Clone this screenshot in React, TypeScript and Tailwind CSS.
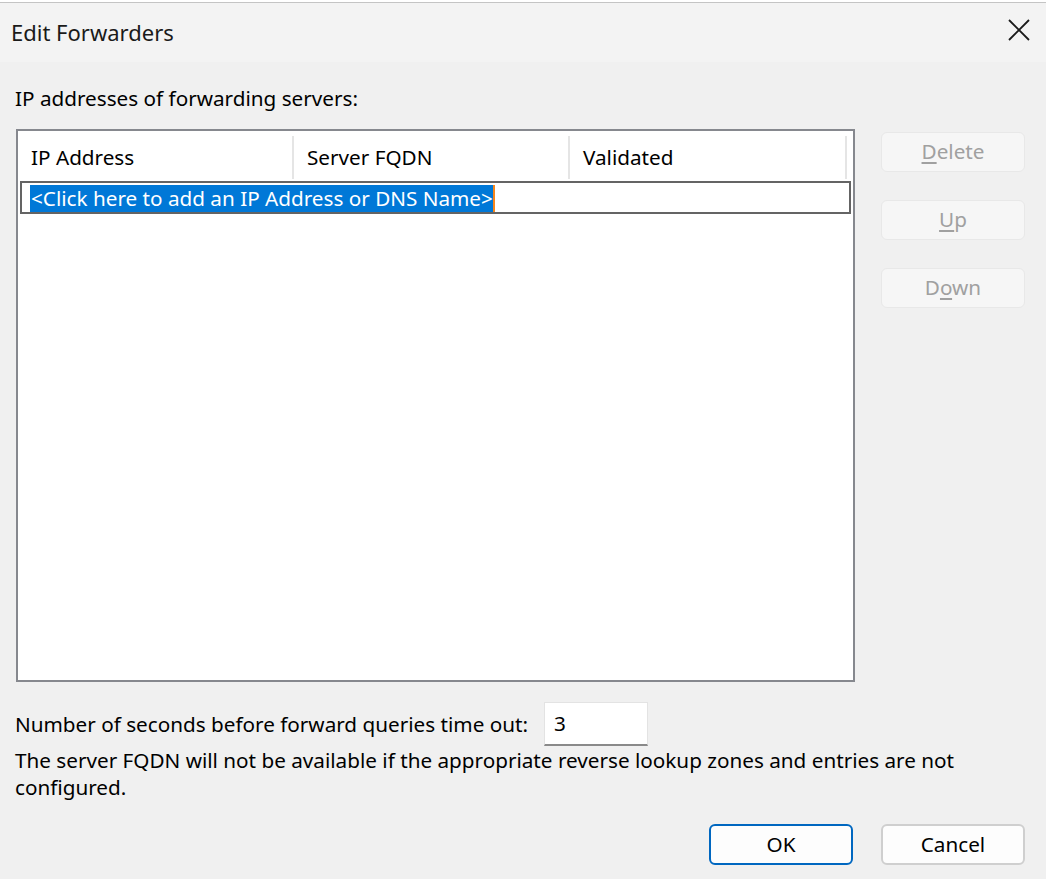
import React from 'react';

const font = { fontFamily: '"Noto Sans", "Open Sans", Arial, sans-serif' };

const SideButton = ({ label, mn }: { label: string; mn: number }) => (
  <div className="w-[144px] h-[40px] rounded-[6px] border border-[#e8e8e8] bg-[#f6f6f6] flex items-center justify-center text-[#a0a0a0]">
    <span>
      {label.slice(0, mn)}
      <span className="underline underline-offset-[3px]">{label[mn]}</span>
      {label.slice(mn + 1)}
    </span>
  </div>
);

const App: React.FC = () => {
  return (
    <div
      className="w-[1046px] h-[879px] bg-[#f0f0f0] flex flex-col text-[20.7px] text-black overflow-hidden"
      style={font}
    >
      {/* bit of the window behind */}
      <div className="h-[3px] bg-white border-b border-[#c4c4c4] shrink-0"></div>

      {/* Title bar */}
      <div className="h-[59px] bg-[#f3f3f3] flex items-center justify-between pl-[11px] pr-[16px] shrink-0">
        <span className="text-[22px] text-[#1a1a1a]">Edit Forwarders</span>
        <svg width="22" height="22" viewBox="0 0 22 22" className="-mt-[5px]">
          <path d="M1 1 L21 21 M21 1 L1 21" stroke="#1a1a1a" strokeWidth="1.8" />
        </svg>
      </div>

      {/* Body */}
      <div className="flex-1 flex flex-col pl-[16px] pr-[21px]">
        <div className="h-[28px] mt-[22px] leading-[28px] -ml-[1px]">IP addresses of forwarding servers:</div>

        <div className="flex mt-[17px]">
          {/* List */}
          <div className="w-[839px] h-[553px] border-2 border-[#86888e] bg-white flex flex-col">
            <div className="h-[50px] flex shrink-0 pt-[3px]">
              <div className="w-[276px] flex items-center pl-[13px] border-r-2 border-[#e5e5e5] my-[2px]">IP Address</div>
              <div className="w-[276px] flex items-center pl-[13px] border-r-2 border-[#e5e5e5] my-[2px]">Server FQDN</div>
              <div className="w-[277px] flex items-center pl-[13px] border-r-2 border-[#e5e5e5] my-[2px]">Validated</div>
            </div>
            <div className="h-[33px] mx-[2px] border-2 border-[#646464] flex items-center pl-[8px] pt-[1px] shrink-0">
              <span className="h-[27px] leading-[27px] bg-[#0078d7] text-white pl-[1px] border-r-2 border-[#f7861c]">
                &lt;Click here to add an IP Address or DNS Name&gt;
              </span>
            </div>
          </div>

          {/* Side buttons */}
          <div className="ml-[26px] mt-[3px] flex flex-col gap-[28px]">
            <SideButton label="Delete" mn={0} />
            <SideButton label="Up" mn={0} />
            <SideButton label="Down" mn={1} />
          </div>
        </div>

        {/* Timeout */}
        <div className="flex items-center mt-[20px] -ml-[1px]">
          <span className="w-[529px] leading-[28px]">Number of seconds before forward queries time out:</span>
          <div className="w-[104px] h-[44px] bg-white border border-[#e3e3e3] border-b-2 border-b-[#8a8a8a] flex items-center pl-[9px]">
            3
          </div>
        </div>

        <p className="mt-[1px] leading-[27px] w-[960px] -ml-[1px]">
          The server FQDN will not be available if the appropriate reverse lookup zones and entries are not configured.
        </p>

        <div className="flex justify-end gap-[28px] mt-[23px]">
          <div className="w-[144px] h-[41px] rounded-[6px] border-2 border-[#0067c0] bg-[#fdfdfd] flex items-center justify-center">
            OK
          </div>
          <div className="w-[144px] h-[41px] rounded-[6px] border-2 border-[#cfcfcf] bg-[#fdfdfd] flex items-center justify-center">
            Cancel
          </div>
        </div>
      </div>
    </div>
  );
};

export default App;
